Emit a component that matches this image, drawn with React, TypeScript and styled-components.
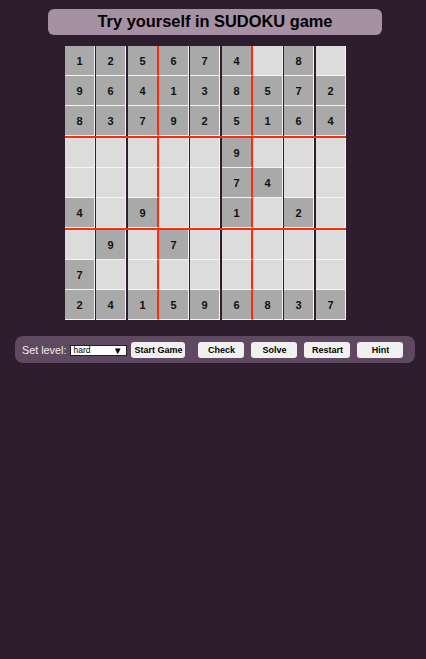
import React from "react";
import styled, { createGlobalStyle, css } from "styled-components";

const GlobalStyle = createGlobalStyle`
  html, body {
    margin: 0;
    padding: 0;
    background: #2e1d2e;
    font-family: "Liberation Sans", Arial, sans-serif;
  }
  #root { min-height: 100vh; }
`;

const Page = styled.div`
  display: flex;
  flex-direction: column;
  align-items: flex-start;
  padding-top: 9px;
  min-height: 659px;
  box-sizing: border-box;
  background: #2e1d2e;
`;

const TitleBar = styled.h1`
  margin: 0 0 0 48px;
  width: 334px;
  height: 26px;
  border-radius: 6px;
  background: #a690a4;
  color: #000;
  font-size: 16.4px;
  font-weight: bold;
  line-height: 25px;
  text-align: center;
`;

const Board = styled.div`
  margin: 11px 0 0 65px;
  display: flex;
  flex-direction: column;
`;

const BoardRow = styled.div<{ $boxEnd: boolean }>`
  display: flex;
  ${(p) =>
    p.$boxEnd &&
    css`
      border-bottom: 2px solid #ff2a0a;
    `}
`;

type ColKind = "a" | "b" | "c" | "last";

const Cell = styled.div<{ $given: boolean; $kind: ColKind }>`
  width: 29px;
  height: 29px;
  display: flex;
  align-items: center;
  justify-content: center;
  background: ${(p) => (p.$given ? "#a9a9a9" : "#dcdcdc")};
  border-bottom: 1px solid #f4f4f4;
  border-right: ${(p) => (p.$kind === "c" ? "2px solid #ff2a0a" : "1px solid #f4f4f4")};
  margin-right: ${(p) => (p.$kind === "a" ? "1px" : p.$kind === "b" ? "2px" : "0")};
  color: #111;
  font-size: 11px;
  font-weight: bold;
`;

const ControlBar = styled.div`
  margin: 16px 0 0 15px;
  width: 400px;
  height: 27px;
  box-sizing: border-box;
  border-radius: 8px;
  background: #5f4960;
  display: flex;
  align-items: center;
  padding-left: 7px;
`;

const LevelLabel = styled.label`
  color: #f3ebf3;
  font-size: 10.8px;
  margin-right: 4px;
  white-space: nowrap;
`;

const SelectWrap = styled.div`
  position: relative;
  display: flex;
  width: 57px;
  height: 11px;
  margin-top: 1px;
`;

const LevelSelect = styled.select`
  appearance: none;
  -webkit-appearance: none;
  display: block;
  width: 57px;
  height: 11px;
  min-height: 0;
  box-sizing: border-box;
  margin: 0;
  padding: 0 0 0 2px;
  border: 1px solid #222;
  border-radius: 0;
  background: #fff;
  color: #000;
  font-family: "Liberation Sans", Arial, sans-serif;
  font-size: 8.5px;
  line-height: 9px;
  outline: none;
`;

const Arrow = styled.span`
  position: absolute;
  right: 5px;
  top: 0;
  font-size: 9.5px;
  line-height: 11px;
  color: #000;
  pointer-events: none;
`;

const Button = styled.button<{ $fixed?: boolean }>`
  height: 16px;
  box-sizing: border-box;
  margin: 0;
  padding: 0 3px;
  border: none;
  border-radius: 3px;
  background: #f1f0f1;
  color: #000;
  font-family: "Liberation Sans", Arial, sans-serif;
  font-size: 9px;
  font-weight: bold;
  white-space: nowrap;
  ${(p) =>
    p.$fixed &&
    css`
      width: 46px;
    `}
`;

const StartButton = styled(Button)`
  margin-left: 4px;
  width: 54px;
  padding: 0;
`;

const ActionGroup = styled.div`
  display: flex;
  gap: 7px;
  margin-left: 13px;
`;

const rows: string[] = [
  "125674.8.",
  "964138572",
  "837925164",
  ".....9...",
  ".....74..",
  "4.9..1.2.",
  ".9.7.....",
  "7........",
  "241596837",
];

const kindFor = (c: number): ColKind => {
  if (c === 8) return "last";
  const m = c % 3;
  return m === 0 ? "a" : m === 1 ? "b" : "c";
};

export default function App() {
  return (
    <>
      <GlobalStyle />
      <Page>
        <TitleBar>Try yourself in SUDOKU game</TitleBar>
        <Board>
          {rows.map((row, r) => (
            <BoardRow key={r} $boxEnd={r === 2 || r === 5}>
              {row.split("").map((ch, c) => (
                <Cell key={c} $given={ch !== "."} $kind={kindFor(c)}>
                  {ch !== "." ? ch : ""}
                </Cell>
              ))}
            </BoardRow>
          ))}
        </Board>
        <ControlBar>
          <LevelLabel htmlFor="level">Set level:</LevelLabel>
          <SelectWrap>
            <LevelSelect id="level" defaultValue="hard">
              <option value="easy">easy</option>
              <option value="medium">medium</option>
              <option value="hard">hard</option>
            </LevelSelect>
            <Arrow>▼</Arrow>
          </SelectWrap>
          <StartButton>Start Game</StartButton>
          <ActionGroup>
            <Button $fixed>Check</Button>
            <Button $fixed>Solve</Button>
            <Button $fixed>Restart</Button>
            <Button $fixed>Hint</Button>
          </ActionGroup>
        </ControlBar>
      </Page>
    </>
  );
}
